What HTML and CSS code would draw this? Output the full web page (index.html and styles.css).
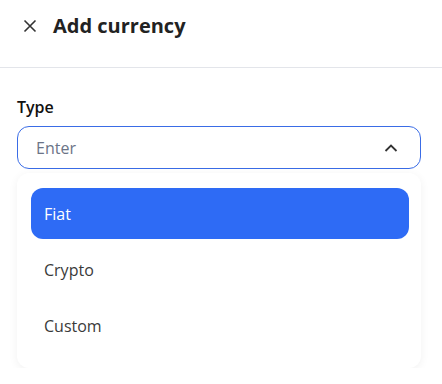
FILE: index.html
```html
<!doctype html>
<html lang="en">

<head>
    <meta charset="utf-8">
    <title>Add currency</title>
    <link rel="stylesheet" href="styles.css">
</head>

<body>
    <div class="header">
        <button class="close" type="button" aria-label="Close">
            <svg width="14" height="14" viewBox="0 0 14 14">
                <path d="M1.5 1.5 L12.5 12.5 M12.5 1.5 L1.5 12.5" stroke="#333" stroke-width="1.6" fill="none" />
            </svg>
        </button>
        <h1 class="title">Add currency</h1>
    </div>

    <form class="form">
        <label class="label">Type</label>
        <div class="select">
            <span class="placeholder">Enter</span>
            <svg class="chevron" width="14" height="8" viewBox="0 0 14 8">
                <path d="M1.5 7 L7 1.5 L12.5 7" stroke="#333" stroke-width="1.8" fill="none" />
            </svg>
        </div>
        <ul class="menu">
            <li class="item active">Fiat</li>
            <li class="item">Crypto</li>
            <li class="item">Custom</li>
        </ul>
    </form>
</body>

</html>
```

FILE: styles.css
```css
body {
    margin: 0;
    font-family: "Open Sans", "Noto Sans", sans-serif;
    color: #222;
    background: #fff;
}
.header {
    display: flex;
    align-items: center;
    box-sizing: border-box;
    height: 68px;
    padding-left: 22px;
    padding-bottom: 16px;
    border-bottom: 1px solid #e3e5ea;
}
.close {
    border: 0;
    background: none;
    padding: 0;
    width: 16px;
    height: 16px;
    display: flex;
    align-items: center;
    justify-content: center;
}
.title {
    margin: 0 0 0 15px;
    font-size: 20px;
    font-weight: 700;
    color: #222;
}
.form {
    padding: 0 21px 0 17px;
}
.label {
    display: block;
    margin-top: 28px;
    font-size: 16px;
    font-weight: 600;
    line-height: 22px;
    color: #111;
}
.select {
    margin-top: 8px;
    height: 43px;
    box-sizing: border-box;
    border: 1px solid #3a6ce6;
    border-radius: 12px;
    display: flex;
    align-items: center;
    justify-content: space-between;
    padding: 0 22px 0 18px;
}
.placeholder {
    font-size: 16px;
    color: #6b7487;
}
.menu {
    list-style: none;
    margin: 4px 0 0 0;
    padding: 15px 12px 17px 14px;
    border-radius: 12px;
    background: #fff;
    box-shadow: 0 2px 10px rgba(0, 0, 0, 0.06);
    display: flex;
    flex-direction: column;
    gap: 5px;
}
.item {
    height: 51px;
    display: flex;
    align-items: center;
    padding-left: 13px;
    font-size: 16px;
    color: #3a3a3a;
    border-radius: 12px;
}
.item.active {
    background: #2e6bf5;
    color: #fff;
}
```
